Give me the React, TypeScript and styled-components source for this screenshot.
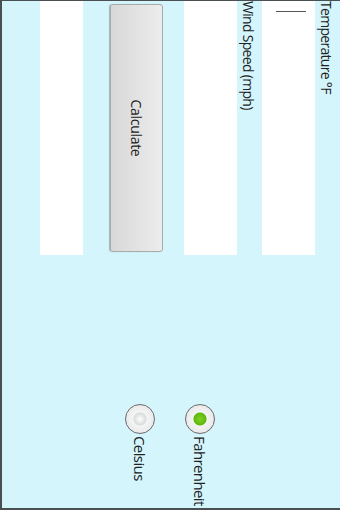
import { createGlobalStyle, styled } from 'styled-components';

const GlobalStyle = createGlobalStyle`
html, body {
  margin: 0;
  padding: 0;
  background: #d4f5fc;
}
`;

// the phone was held sideways: the app is laid out landscape and turned a quarter
function App() {
  return (
    <Screen>
      <GlobalStyle />
      <Landscape>
        <FormColumn>
          <FieldLabel>Temperature °F</FieldLabel>
          <TextField $height={53}>
            <Caret />
          </TextField>
          <FieldLabel>Wind Speed (mph)</FieldLabel>
          <TextField $height={53} />
          <CalcButton>Calculate</CalcButton>
          <TextField $height={43} $narrow />
        </FormColumn>

        <RadioGroup>
          <RadioRow>
            <RadioCircle $checked />
            <RadioLabel>Fahrenheit</RadioLabel>
          </RadioRow>
          <RadioRow>
            <RadioCircle />
            <RadioLabel>Celsius</RadioLabel>
          </RadioRow>
        </RadioGroup>
      </Landscape>
    </Screen>
  );
}

export default App;


const Screen = styled.div`
position: relative;
width: 340px;
height: 510px;
overflow: hidden;
background: #d4f5fc;
`;

const Landscape = styled.div`
box-sizing: border-box;
width: 510px;
height: 340px;
display: flex;
transform-origin: 0 0;
transform: translateX(340px) rotate(90deg);
border-left: 1px solid #4a4f52;
border-right: 2px solid #4a4f52;
border-bottom: 2px solid #4a4f52;
font-family: "Open Sans", "Noto Sans", sans-serif;
color: #2a2a2a;
`;

const FormColumn = styled.div`
display: flex;
flex-direction: column;
width: 254px;
padding-top: 4px;
`;

const FieldLabel = styled.div`
height: 21px;
font-size: 14px;
line-height: 19px;
letter-spacing: -0.7px;
white-space: nowrap;
color: #222;
`;

const TextField = styled.div<{ $height: number; $narrow?: boolean }>`
position: relative;
height: ${ ({ $height }) => $height }px;
width: 254px;
background: #ffffff;
margin-bottom: ${ ({ $narrow }) => $narrow ? 0 : 4 }px;
`;

const Caret = styled.div`
position: absolute;
left: 10px;
top: 9px;
width: 1px;
height: 30px;
background: #555;
`;

const CalcButton = styled.div`
box-sizing: border-box;
height: 53px;
width: 248px;
margin: 17px 0 27px 3px;
display: flex;
align-items: center;
justify-content: center;
border: 1px solid #a9aaa9;
border-radius: 3px;
background: linear-gradient(#ececec, #d8d8d8);
box-shadow: 0 1px 1px rgba(0, 0, 0, 0.25);
font-size: 14px;
letter-spacing: -0.3px;
color: #222;
`;

const RadioGroup = styled.div`
display: flex;
flex-direction: column;
row-gap: 30px;
margin-left: 149px;
padding-top: 125px;
`;

const RadioRow = styled.div`
display: flex;
align-items: center;
column-gap: 2px;
`;

const RadioCircle = styled.div<{ $checked?: boolean }>`
box-sizing: border-box;
width: 30px;
height: 30px;
border-radius: 50%;
border: 1.5px solid #6a6a6a;
background: radial-gradient(circle at 50% 50%, ${ ({ $checked }) => $checked ? '#7fd321 0, #5fb80f 6px, #f4f4f4 7px' : '#ffffff 0, #d8dcdc 6px, #f4f4f4 7px' }, #e2e2e2 100%);
flex-shrink: 0;
`;

const RadioLabel = styled.span`
font-size: 15px;
letter-spacing: -0.6px;
white-space: nowrap;
color: #222;
`;
